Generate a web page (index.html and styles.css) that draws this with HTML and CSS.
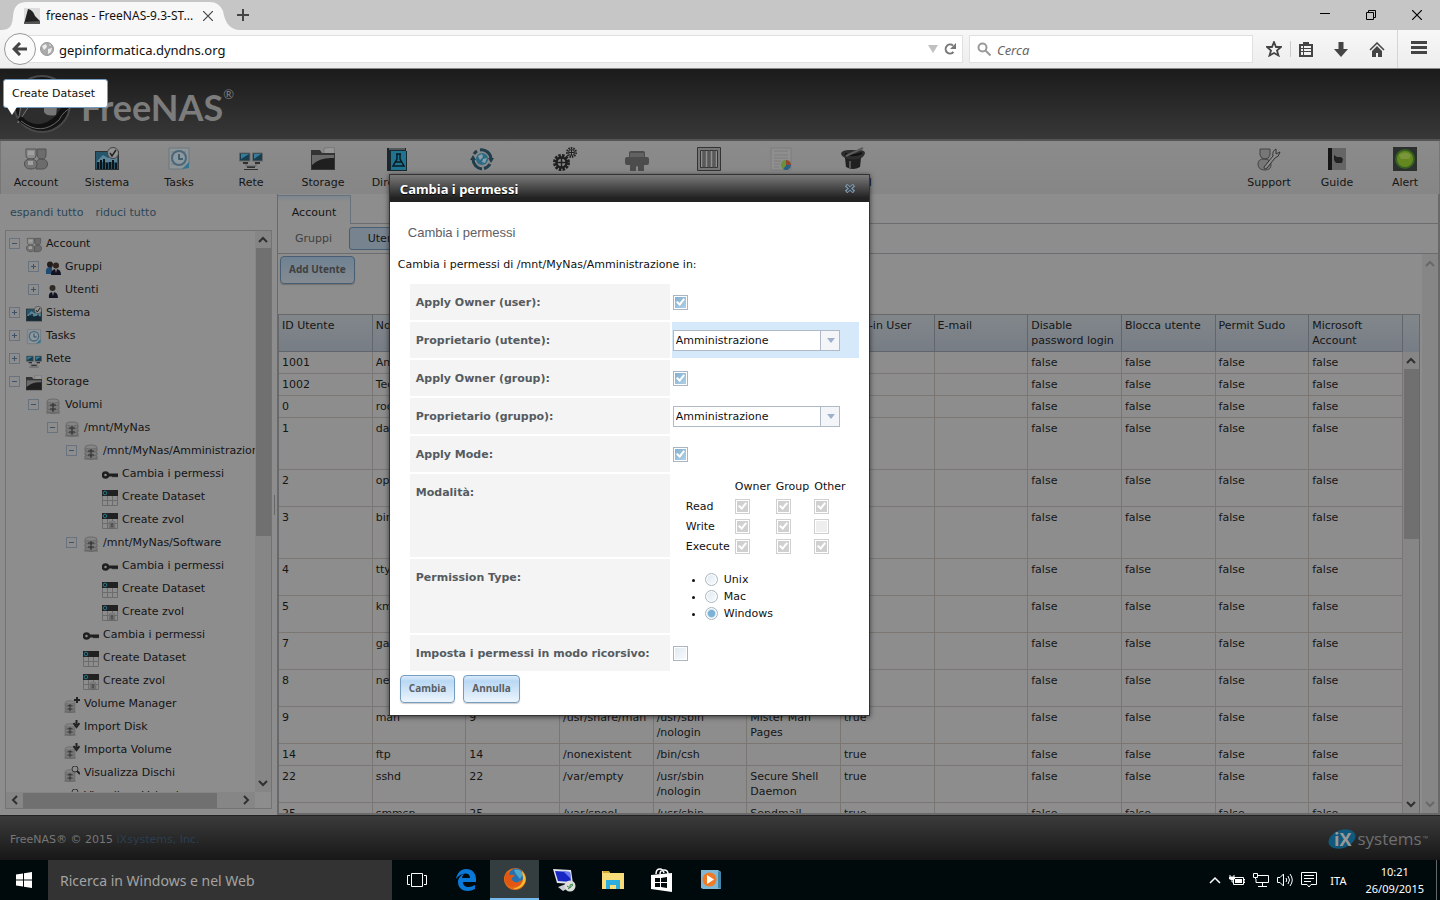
FILE: index.html
```html
<!DOCTYPE html>
<html lang="it">
<head>
    <meta charset="UTF-8">
    <meta name="viewport" content="width=device-width, initial-scale=1.0">
    <title>freenas - FreeNAS-9.3-STABLE</title>
    <link rel="stylesheet" href="styles.css">
</head>
<body>

    <!-- shared icons -->
    <svg class="sprite" width="0" height="0">
        <symbol id="i-account" viewBox="0 0 24 24">
            <g stroke="#505050" fill="#6c6c6c"><path d="M13 2h9v6c0 3-2 4-4 4s-5-1-5-4zM12 22v-5c0-4 3-5 6-5s5.500 2 5.500 5-2 5-5 5z"/><path d="M2 2h10v6c0 3-2 4-5 4S2 11 2 8z" fill="#8c8c8c"/><path d="M.500 17c0-3 2-5 6-5s6.500 2 6.500 5-2 5-6 5-6.500-2-6.500-5z" fill="#757575"/></g>
            <path d="M4 4h6v4H4zM4 14h5v4H4z" fill="#a0a0a0"/>
        </symbol>
        <symbol id="i-system" viewBox="0 0 24 24">
            <path d="M0 4h24v19H0z" fill="#2c2f31"/><path d="M1 5h22v17H1z" fill="#26566c"/><path d="M2 14l6-6 5 3 9-4v8H2z" fill="#5b8496"/>
            <path d="M3 22v-7M6 22v-9M9 22V12M12 22v-6M15 22v-7M18 22v-9M21 22v-6" stroke="#0c1519" stroke-width="2"/>
            <circle cx="18" cy="6" r="5.500" fill="#929292" stroke="#444"/><path d="M15 6l2 3 4-6" fill="none" stroke="#222" stroke-width="1.500"/>
        </symbol>
        <symbol id="i-tasks" viewBox="0 0 24 24">
            <path d="M2 1h20v16l-5 5H2z" fill="#8d9599" stroke="#6c767c"/><path d="M4 5h15M4 8h15M4 11h15M4 14h15M4 17h12" stroke="#6c7e8b"/>
            <circle cx="12" cy="11" r="7" fill="#8d989f" stroke="#4b6779" stroke-width="2"/><path d="M12 7v5h4" fill="none" stroke="#284d63" stroke-width="1.500"/><path d="M22 15l-7 7 7-1z" fill="#34758e"/>
        </symbol>
        <symbol id="i-net" viewBox="0 0 24 24">
            <path d="M0.500 6h10.500v8H.500zM13.500 6H23.500v8h-10z" fill="#183d4d" stroke="#666"/><path d="M2 7h8l-8 5zM15 7h7l-7 5z" fill="#347c9b"/>
            <path d="M4 15h5v2H4zM16 15h5v2h-5zM8 19h8v2H8zM5 22h14v1H5z" fill="#303030"/><path d="M7 17v2h10v-2" fill="none" stroke="#666"/>
        </symbol>
        <symbol id="i-storage" viewBox="0 0 24 24">
            <path d="M13 1l10-1 1 9H13z" fill="#959595" stroke="#777"/><path d="M0 3h9l2 3h13v17H0z" fill="#343434"/><path d="M1 8h22v14H1z" fill="#1f1f1f"/><path d="M1 18Q9 10 23 11V8H1z" fill="#6a6a6a"/>
        </symbol>
        <symbol id="i-directory" viewBox="0 0 24 24">
            <path d="M2 1h19v3h1v20H2z" fill="#18282e"/><path d="M6 4h15v19H6z" fill="#1e7491"/><path d="M4 2h16" stroke="#8a8a8a"/>
            <path d="M11 7h5M12 7v5l-4 7h11l-4-7V7M10 15h7" fill="none" stroke="#0b1a20" stroke-width="1.500"/>
        </symbol>
        <symbol id="i-sharing" viewBox="0 0 24 24">
            <circle cx="12" cy="12" r="6" fill="#2c6a86"/><path d="M8 9l4-2 1 3-3 3zM13 12l4-1-2 5-3-1z" fill="#86a0aa"/>
            <path d="M10 3a9.500 9.500 0 0 1 11 9M20 17a10 10 0 0 1-6 4.500M12 22A10 10 0 0 1 3 12M4 7a10 10 0 0 1 3-3" fill="none" stroke="#1f3d4b" stroke-width="3"/><path d="M18 11h6l-3 5zM0 13l3-5 3 5z" fill="#1f3d4b"/>
        </symbol>
        <symbol id="i-services" viewBox="0 0 24 24">
            <g fill="none" stroke="#1f1f1f"><circle cx="8.500" cy="15.500" r="7" stroke-width="3" stroke-dasharray="2.500 1.200"/><circle cx="8.500" cy="15.500" r="5" stroke-width="2.500"/><path d="M8.500 11v9M4 15.500h9" stroke-width="1.500"/><circle cx="18.500" cy="5.500" r="4.500" stroke-width="2" stroke-dasharray="1.500 1"/><circle cx="18.500" cy="5.500" r="3"/><path d="M18.500 3v5M16 5.500h5"/></g>
        </symbol>
        <symbol id="i-plugin" viewBox="0 0 24 24">
            <path d="M4 10V6q0-2 2-2h12q2 0 2 2v4h2q2 0 2 2v4q0 2-2 2h-3v6h-6v-4q-1-2-2 0v4H5v-6H2q-2 0-2-2v-4q0-2 2-2z" fill="#4c4c4c"/><path d="M5 6h14v4H5z" fill="#626262"/>
        </symbol>
        <symbol id="i-jails" viewBox="0 0 24 24">
            <path d="M.500.500h23v23H.5z" fill="#777" stroke="#333"/><path d="M3.500 3.500h17v17h-17z" fill="#909090" stroke="#333"/><path d="M7 3v18M12 3v18M17 3v18" stroke="#3d3d3d" stroke-width="3"/><path d="M7 4v16M12 4v16M17 4v16" stroke="#777"/>
        </symbol>
        <symbol id="i-report" viewBox="0 0 24 24">
            <path d="M2 1h20v22H2z" fill="#8f8f8f" stroke="#7c7c7c"/><path d="M5 4h14M5 8h14M5 11h14M5 14h7M5 17h6M5 20h5" stroke="#7c7c7c"/>
            <path d="M17 18v-5a5 5 0 0 1 5 5z" fill="#91472f"/><path d="M17 18h5a5 5 0 0 1-8 4z" fill="#2b5f83"/><path d="M17 18l-3 4a5 5 0 0 1 3-9z" fill="#6c9039"/>
        </symbol>
        <symbol id="i-wizard" viewBox="0 0 24 24">
            <path d="M4 11h16l-1 9q-7 4-14 0z" fill="#202020"/><path d="M0 7q0-4 9-4h8q7 0 7 3-1 5-7 6-14 2-17-5z" fill="#2d2d2d"/><path d="M4 7q8 3 17-1" stroke="#111" stroke-width="2" fill="none"/><path d="M5 9L22 1" stroke="#5c5c5c" stroke-width="2"/><path d="M9 14v7" stroke="#555" stroke-width="2"/>
        </symbol>
        <symbol id="i-support" viewBox="0 0 24 24">
            <path d="M3 2h10v6q-1 4-5 4T3 8zM1 17q0-5 6-5 7 0 7 6 0 5-6 5-7 0-7-6z" fill="#777" stroke="#454545"/>
            <path d="M7 20l9-11q-1-5 3-7v5l4-2q-1 5-5 6l-8 10q-3 2-3-1z" fill="#8c8c8c" stroke="#333"/>
        </symbol>
        <symbol id="i-guide" viewBox="0 0 24 24"><path d="M3 1h18v22H3z" fill="#656565"/><path d="M3 1h4v22H3z" fill="#151515"/><path d="M9 8l3 2h4l2 2-1 4h-6l-2-3z" fill="#222"/></symbol>
        <symbol id="i-alert" viewBox="0 0 24 24"><path d="M0 0h24v24H0z" fill="#2b302d"/><circle cx="12" cy="12" r="10" fill="#356021"/><circle cx="12" cy="12" r="8" fill="#64881f"/><path d="M6 8q6-5 12 0l-2 4H8z" fill="#7a963c"/></symbol>
        <symbol id="i-group" viewBox="0 0 16 16"><path d="M1 14q-1-6 3-7h3v7z" fill="#204b72"/><circle cx="5" cy="4.500" r="3" fill="#241e1b"/><circle cx="11" cy="5.500" r="3" fill="#30241f"/><path d="M6 15q0-6 5-6t5 6z" fill="#121220"/><path d="M10 9l1 4 1-4z" fill="#888"/></symbol>
        <symbol id="i-user" viewBox="0 0 16 16"><circle cx="7.500" cy="5" r="3" fill="#302a27"/><path d="M4 15q-1-6 4-6t5 6z" fill="#121220"/><path d="M7 9l1 4 1-4z" fill="#888"/></symbol>
        <symbol id="i-disk" viewBox="0 0 16 16">
            <path d="M2 3v12h12V3z" fill="#7b7b7b"/><ellipse cx="8" cy="3" rx="6" ry="2" fill="#858585" stroke="#6a6a6a"/><path d="M2 4v3q6 3 12 0V4M2 8v3q6 3 12 0V8M2 12v2q6 3 12 0v-2M1 15h14" fill="none" stroke="#666"/><path d="M8 5v9M5 7h6M5 11h6" stroke="#292929"/>
        </symbol>
        <symbol id="i-diskadd" viewBox="0 0 16 16"><use href="#i-disk" x="-1" y="3" width="14" height="13"/><path d="M13 0v6M10 3h6" stroke="#222" stroke-width="2"/></symbol>
        <symbol id="i-diskimport" viewBox="0 0 16 16"><use href="#i-disk" x="-1" y="3" width="14" height="13"/><path d="M12.500 0v5M9.500 3l3 4 3-4" fill="none" stroke="#222" stroke-width="2"/></symbol>
        <symbol id="i-diskview" viewBox="0 0 16 16"><use href="#i-disk" x="-1" y="3" width="14" height="13"/><circle cx="11" cy="3" r="3" fill="#8d8d8d" stroke="#333"/><path d="M13 5l3 3" stroke="#222" stroke-width="2"/></symbol>
        <symbol id="i-key" viewBox="0 0 16 16"><circle cx="3.500" cy="8" r="2.500" fill="none" stroke="#1f1f1f" stroke-width="2.500"/><path d="M6 6.500h10v3l-1 1-1-1-1 1-1-1-1 1-1-1H6z" fill="#1f1f1f"/></symbol>
        <symbol id="i-dataset" viewBox="0 0 16 16"><path d="M.500 5.500h15v10H.5zM5.500 5v10M10.500 5v10M0 10.500h16" fill="none" stroke="#6c6c6c"/><path d="M0 0h16v6H0z" fill="#212121"/><circle cx="3" cy="3" r="1.800" fill="none" stroke="#27798f"/></symbol>
        <symbol id="i-zvol" viewBox="0 0 16 16"><use href="#i-dataset"/><use href="#i-disk" x="6" y="7" width="8" height="9"/></symbol>
        <symbol id="i-up" viewBox="0 0 10 10"><path d="M1 7l4-4 4 4" fill="none" stroke="currentColor" stroke-width="2"/></symbol>
        <symbol id="i-down" viewBox="0 0 10 10"><path d="M1 3l4 4 4-4" fill="none" stroke="currentColor" stroke-width="2"/></symbol>
        <symbol id="i-left" viewBox="0 0 10 10"><path d="M7 1L3 5l4 4" fill="none" stroke="currentColor" stroke-width="2"/></symbol>
        <symbol id="i-right" viewBox="0 0 10 10"><path d="M3 1l4 4-4 4" fill="none" stroke="currentColor" stroke-width="2"/></symbol>
    </svg>

    <div class="tabstrip">
        <svg class="tab-shape" viewBox="0 0 238 28" width="238" height="28"><path d="M0 28C14 28 9 13 13 6Q16 0 24 0h184Q217 0 221 9q3 19 17 19z" fill="#f7f7f7"/></svg>
        <div class="tab">
            <svg width="16" height="16" viewBox="0 0 16 16"><path d="M0 0h16v16H0z" fill="#ddd"/><path d="M0 16L4 1q5 1 7 7l5 5v3z" fill="#222"/><path d="M0 14l16-1v3H0z" fill="#555"/></svg>
            <span class="tab-title">freenas - FreeNAS-9.3-ST...</span>
            <button class="plain" aria-label="Chiudi scheda"><svg width="10" height="10" viewBox="0 0 10 10"><path d="M0 0l10 10M10 0L0 10" stroke="#444" stroke-width="1.200"/></svg></button>
        </div>
        <button class="plain" aria-label="Nuova scheda"><svg width="12" height="12" viewBox="0 0 12 12"><path d="M6 0v12M0 6h12" stroke="#444" stroke-width="2"/></svg></button>
        <div class="win-buttons">
            <button class="plain" aria-label="Riduci"><svg width="10" height="10"><path d="M0 3.500h10" stroke="#000"/></svg></button>
            <button class="plain" aria-label="Ripristina"><svg width="10" height="10"><path d="M.500 2.500h7v7h-7zM2.500 2V.500h7v7H8" fill="none" stroke="#000"/></svg></button>
            <button class="plain" aria-label="Chiudi"><svg width="10" height="10"><path d="M0 0l10 10M10 0L0 10" stroke="#000" stroke-width="1.200"/></svg></button>
        </div>
    </div>

    <div class="navbar">
        <button class="back" aria-label="Indietro"><svg width="16" height="14" viewBox="0 0 16 14"><path d="M8 1L2 7l6 6M2 7h13" fill="none" stroke="#444" stroke-width="3"/></svg></button>
        <div class="urlbar">
            <svg width="14" height="14" viewBox="0 0 14 14"><circle cx="7" cy="7" r="6.500" fill="#aaa" stroke="#999"/><path d="M2 4l4-2 1 3-3 3zM8 7l4-1-1 4-3 2zM9 2l2 1-1 1z" fill="#eee"/></svg>
            <input class="url" aria-label="Indirizzo" value="gepinformatica.dyndns.org">
            <svg width="10" height="8"><path d="M0 0h10L5 8z" fill="#c0c0c0"/></svg>
            <svg width="12" height="12" viewBox="0 0 12 12"><path d="M9.500 9A4.500 4.500 0 1 1 9 2.500" fill="none" stroke="#777" stroke-width="2"/><path d="M6 6h6V0z" fill="#777"/></svg>
        </div>
        <div class="searchbar">
            <svg width="14" height="14" viewBox="0 0 14 14"><circle cx="5.500" cy="5.500" r="4" fill="none" stroke="#999" stroke-width="2"/><path d="M8.500 8.500l5 5" stroke="#999" stroke-width="2"/></svg>
            <input type="search" aria-label="Cerca" placeholder="Cerca">
        </div>
        <div class="nav-icons">
            <svg width="16" height="16" viewBox="0 0 16 16"><path d="M8 1l2 5h5l-4 3.500 1.500 5L8 12l-4.500 2.500L5 9.500 1 6h5z" fill="none" stroke="#444" stroke-width="1.800"/></svg>
            <span class="nav-sep"></span>
            <svg width="14" height="15" viewBox="0 0 14 15"><path d="M1 3h12v11H1z" fill="none" stroke="#444" stroke-width="2"/><path d="M4 0h6v3H4zM2 6h10v1H2zM2 9h10v1H2z" fill="#444"/><path d="M4.500 4v10" stroke="#444"/></svg>
            <svg width="14" height="15" viewBox="0 0 14 15"><path d="M4.500 0h5v7H14l-7 8-7-8h4.500z" fill="#444"/></svg>
            <svg width="16" height="15" viewBox="0 0 16 15"><path d="M1 8l7-7 7 7" fill="none" stroke="#444" stroke-width="1.500"/><path d="M3 9l5-5 5 5v6H9v-4H7v4H3z" fill="#444"/></svg>
        </div>
        <button class="menu-button" aria-label="Menu"><svg width="16" height="13"><path d="M0 1.500h16M0 6.500h16M0 11.500h16" stroke="#444" stroke-width="3"/></svg></button>
    </div>

    <header class="banner">
        <svg class="emblem" width="66" height="62" viewBox="0 0 66 62">
            <circle cx="33" cy="31" r="27" fill="#242424" stroke="#484848" stroke-width="4"/>
            <circle cx="33" cy="31" r="25" fill="#2d2d2d" stroke="#151515" stroke-width="4"/>
            <path d="M9 50L14 20l12-8h22L22 30z" fill="#333" stroke="#777"/>
            <path d="M35 34q8-8 13 0l-1 8q-9 2-12-3z" fill="#777"/>
            <path d="M10 45q20 18 39-1 5-10 15-12" fill="none" stroke="#111" stroke-width="5"/>
            <path d="M12 48q20 16 38-1 4-9 15-14" fill="none" stroke="#666"/>
        </svg>
        <span class="logo-text">FreeNAS<sup>®</sup></span>
    </header>

    <nav class="menubar">
        <button class="first"><svg><use href="#i-account"/></svg>Account</button>
        <button><svg><use href="#i-system"/></svg>Sistema</button>
        <button><svg><use href="#i-tasks"/></svg>Tasks</button>
        <button><svg><use href="#i-net"/></svg>Rete</button>
        <button><svg><use href="#i-storage"/></svg>Storage</button>
        <button class="wide"><svg><use href="#i-directory"/></svg>Directory</button>
        <button class="wider"><svg><use href="#i-sharing"/></svg>Condivisioni</button>
        <button><svg><use href="#i-services"/></svg>Servizi</button>
        <button><svg><use href="#i-plugin"/></svg>Plugins</button>
        <button><svg><use href="#i-jails"/></svg>Jails</button>
        <button><svg><use href="#i-report"/></svg>Reporting</button>
        <button><svg><use href="#i-wizard"/></svg>Wizard</button>
        <div class="menubar-right">
            <button><svg><use href="#i-support"/></svg>Support</button>
            <button><svg><use href="#i-guide"/></svg>Guide</button>
            <button><svg><use href="#i-alert"/></svg>Alert</button>
        </div>
    </nav>

    <main class="main">
        <aside class="sidebar">
            <div class="tree-links"><a href="#">espandi tutto</a><a href="#">riduci tutto</a></div>
            <div class="tree-box">
                <ul class="tree" id="tree"></ul>
                <div class="vscroll"><svg><use href="#i-up"/></svg><div class="thumb tree-thumb"></div><svg class="end"><use href="#i-down"/></svg></div>
                <div class="hscroll"><svg><use href="#i-left"/></svg><div class="thumb"></div><svg class="end"><use href="#i-right"/></svg></div>
            </div>
        </aside>
        <div class="splitter"></div>
        <section class="content">
            <div class="tabs"><button class="tab-account">Account</button></div>
            <div class="subtabs"><button>Gruppi</button><button class="selected">Utenti</button></div>
            <div class="pane">
                <div class="pane-body">
                    <div class="toolbar"><button class="btn">Add Utente</button></div>
                    <div class="grid">
                        <table class="users">
                            <thead>
                                <tr><th>ID Utente</th><th>Nome utente</th><th>Gruppo</th><th>Home</th><th>Shell</th><th>Nome</th><th>Built-in User</th><th>E-mail</th><th>Disable<br>password login</th><th>Blocca utente</th><th>Permit Sudo</th><th>Microsoft<br>Account</th></tr>
                            </thead>
                            <tbody id="users"></tbody>
                        </table>
                        <div class="grid-scroll">
                            <div class="grid-corner"></div>
                            <div class="vscroll"><svg><use href="#i-up"/></svg><div class="thumb grid-thumb"></div><svg class="end"><use href="#i-down"/></svg></div>
                        </div>
                    </div>
                </div>
                <div class="vscroll disabled"><svg><use href="#i-up"/></svg><svg class="end"><use href="#i-down"/></svg></div>
            </div>
        </section>
    </main>

    <footer class="footer">
        <span>FreeNAS® © 2015 <a href="#">iXsystems, Inc.</a></span>
        <span class="ix"><svg width="28" height="24" viewBox="0 0 28 24"><ellipse cx="14" cy="12" rx="14" ry="9" transform="rotate(-20 14 12)" fill="#11597c"/><text x="6" y="19">iX</text></svg>systems<span class="ix-tm">™</span></span>
    </footer>

    <div class="taskbar">
        <button class="task start" aria-label="Start"><svg width="16" height="16" viewBox="0 0 16 16"><path d="M0 2.500L7 1.500V7.500H0zM8 1.300L16 0v7.500H8zM0 8.500h7v6L0 13.500zM8 8.500h8V16L8 14.700z" fill="#fff"/></svg></button>
        <input class="win-search" aria-label="Ricerca in Windows" placeholder="Ricerca in Windows e nel Web">
        <button class="task" aria-label="Visualizzazione attività"><svg width="20" height="14" viewBox="0 0 20 14"><path d="M4.500.5h11v13h-11zM3 2.500H.500v9H3M17 2.500h2.500v9H17" fill="none" stroke="#fff"/></svg></button>
        <button class="task" aria-label="Edge"><svg width="22" height="22" viewBox="0 0 22 22"><path d="M1 10C2 4 6 0 11 0c7 0 10 5 10 10v3H8c0 6 7 6 12 3v4c-7 4-17 2-17-7 0-4 3-7 6-8-1 1-2 3-2 4h8c0-7-10-5-14 1z" fill="#0a78d6"/></svg></button>
        <button class="task active" aria-label="Firefox"><svg width="22" height="22" viewBox="0 0 22 22"><circle cx="11" cy="11" r="11" fill="#e66a16"/><circle cx="12" cy="8" r="7.500" fill="#2672b0"/><path d="M10 2q6-2 9 4l-3 5-4-5z" fill="#4fa8cc"/><path d="M1 6q3-3 5 1 4-1 5 1-4 1-3 4 5 5 8 0 3 4-3 6-9 3-12-5z" fill="#e35713"/><path d="M18 3q6 7 2 13-4 6-11 5 11-3 10-11z" fill="#f7bd33"/></svg></button>
        <button class="task" aria-label="Desktop remoto"><svg width="24" height="24" viewBox="0 0 24 24"><path d="M1 1l18 1 2 14-16-1z" fill="#e0e3ea"/><path d="M3 3l15 1 1 10-13-1z" fill="#1727c4"/><path d="M11 3l7 1 1 7z" fill="#6a7df0"/><path d="M6 19l8-3 4 3-7 4z" fill="#c9ccd4"/><circle cx="18" cy="18" r="5.500" fill="#ddd"/><path d="M15 18l3 2v-3l3-1M16 21l5-4" stroke="#35873f" fill="none"/></svg></button>
        <button class="task" aria-label="Esplora file"><svg width="22" height="20" viewBox="0 0 22 20"><path d="M0 1h7l1 2h14v16H0z" fill="#f9dc7a"/><path d="M1 1h6v2H1z" fill="#d9a92d"/><path d="M4 19v-9h14v9h-4v-4H8v4z" fill="#2bade0"/></svg></button>
        <button class="task" aria-label="Store"><svg width="22" height="24" viewBox="0 0 22 24"><path d="M0 7l21-2v19L0 21z" fill="#fff"/><path d="M5 6q0-5 4-5 3 0 4 4M9 6q0-4 4-4t4 4" fill="none" stroke="#fff" stroke-width="1.500"/><path d="M4 10h5v4H4zM10 10l6-1v5h-6zM4 15h5v4H4zM10 15h6v5l-6-1z" fill="#000a0c"/></svg></button>
        <button class="task" aria-label="Media Player"><svg width="20" height="20" viewBox="0 0 20 20"><path d="M0 0h17l3 2v17H2l-2-1z" fill="#7fb8d6"/><path d="M17 1l3 1v17l-3-1z" fill="#4184a8"/><circle cx="8.500" cy="9.500" r="7" fill="#ef7b24"/><path d="M6 5l7 4.500L6 14z" fill="#fff"/></svg></button>
        <div class="tray">
            <svg width="12" height="8"><path d="M1 7l5-5 5 5" fill="none" stroke="#fff" stroke-width="1.500"/></svg>
            <svg width="16" height="12" viewBox="0 0 16 12"><path d="M4.500 3.500h10v7h-10zM15 5.500h1v3h-1M1 1v2h4V1M3 3v5h1" fill="none" stroke="#fff"/><path d="M6 5h7v4H6z" fill="#fff"/><path d="M0 3h6v2L4 6H2L0 5z" fill="#fff"/></svg>
            <svg width="16" height="14" viewBox="0 0 16 14"><path d="M5 2.500h10.500v7H3V6M9.500 10v3M5 13.500h9M.500.500h4v4h-4zM2.500 4v2" fill="none" stroke="#fff"/></svg>
            <svg width="16" height="14" viewBox="0 0 16 14"><path d="M.500 4.500H3L6.500 1v12L3 9.500H.500zM9 5q1.500 2 0 4M11 3q3 4 0 8M13 1q4.500 6 0 12" fill="none" stroke="#fff"/></svg>
            <svg width="16" height="16" viewBox="0 0 16 16"><path d="M.500.500h15v12H10L8 15l-2-2.500H.500zM3 3.500h10M3 6.500h10M3 9.500h7" fill="none" stroke="#fff"/></svg>
            <span class="lang">ITA</span>
            <span class="clock">10:21<br>26/09/2015</span>
        </div>
    </div>

    <div class="tooltip">Create Dataset</div>

    <div class="dialog" role="dialog" aria-labelledby="dlgTitle">
        <div class="dialog-title"><span id="dlgTitle">Cambia i permessi</span><button class="plain" aria-label="Chiudi"><svg width="10" height="9" viewBox="0 0 10 9"><path d="M1 1l8 7M9 1L1 8" stroke="#8199ad" stroke-width="3.500"/><path d="M2 1.500l6 6M8 1.500l-6 6" stroke="#39444d" stroke-width="1.500"/></svg></button></div>
        <form class="dialog-body">
            <h2>Cambia i permessi</h2>
            <p>Cambia i permessi di /mnt/MyNas/Amministrazione in:</p>
            <table class="fields">
                <tr><th><label for="applyUser">Apply Owner (user):</label></th><td><input type="checkbox" id="applyUser" checked></td></tr>
                <tr class="focus"><th><label for="owner">Proprietario (utente):</label></th><td><span class="combo"><select id="owner"><option>Amministrazione</option></select></span></td></tr>
                <tr><th><label for="applyGroup">Apply Owner (group):</label></th><td><input type="checkbox" id="applyGroup" checked></td></tr>
                <tr><th><label for="group">Proprietario (gruppo):</label></th><td><span class="combo"><select id="group"><option>Amministrazione</option></select></span></td></tr>
                <tr><th><label for="applyMode">Apply Mode:</label></th><td><input type="checkbox" id="applyMode" checked></td></tr>
                <tr class="mode-row"><th>Modalità:</th><td>
                    <table class="mode">
                        <tr><td></td><th>Owner</th><th>Group</th><th>Other</th></tr>
                        <tr><th>Read</th><td><input type="checkbox" aria-label="Owner read" checked disabled></td><td><input type="checkbox" aria-label="Group read" checked disabled></td><td><input type="checkbox" aria-label="Other read" checked disabled></td></tr>
                        <tr><th>Write</th><td><input type="checkbox" aria-label="Owner write" checked disabled></td><td><input type="checkbox" aria-label="Group write" checked disabled></td><td><input type="checkbox" aria-label="Other write" disabled></td></tr>
                        <tr><th>Execute</th><td><input type="checkbox" aria-label="Owner execute" checked disabled></td><td><input type="checkbox" aria-label="Group execute" checked disabled></td><td><input type="checkbox" aria-label="Other execute" checked disabled></td></tr>
                    </table>
                </td></tr>
                <tr class="type-row"><th>Permission Type:</th><td>
                    <ul class="types">
                        <li><label><input type="radio" name="acl">Unix</label></li>
                        <li><label><input type="radio" name="acl">Mac</label></li>
                        <li><label><input type="radio" name="acl" checked>Windows</label></li>
                    </ul>
                </td></tr>
                <tr><th><label for="recursive">Imposta i permessi in modo ricorsivo:</label></th><td><input type="checkbox" id="recursive"></td></tr>
            </table>
            <div class="dialog-actions"><button type="button" class="btn bright">Cambia</button><button type="button" class="btn bright">Annulla</button></div>
        </form>
    </div>

    <script>
        // level, state (- open, + closed, empty leaf), icon, label
        const nodes = [
            [0, "-", "account", "Account"],
            [1, "+", "group", "Gruppi"],
            [1, "+", "user", "Utenti"],
            [0, "+", "system", "Sistema"],
            [0, "+", "tasks", "Tasks"],
            [0, "+", "net", "Rete"],
            [0, "-", "storage", "Storage"],
            [1, "-", "disk", "Volumi"],
            [2, "-", "disk", "/mnt/MyNas"],
            [3, "-", "disk", "/mnt/MyNas/Amministrazione"],
            [4, "", "key", "Cambia i permessi"],
            [4, "", "dataset", "Create Dataset"],
            [4, "", "zvol", "Create zvol"],
            [3, "-", "disk", "/mnt/MyNas/Software"],
            [4, "", "key", "Cambia i permessi"],
            [4, "", "dataset", "Create Dataset"],
            [4, "", "zvol", "Create zvol"],
            [3, "", "key", "Cambia i permessi"],
            [3, "", "dataset", "Create Dataset"],
            [3, "", "zvol", "Create zvol"],
            [2, "", "diskadd", "Volume Manager"],
            [2, "", "diskimport", "Import Disk"],
            [2, "", "diskimport", "Importa Volume"],
            [2, "", "diskview", "Visualizza Dischi"],
            [2, "", "diskview", "Visualizza Volumi"]
        ];
        document.getElementById("tree").innerHTML = nodes.map(([level, state, icon, label]) => `
            <li class="level-${level}">
                <span class="expander ${state === "-" ? "open" : state === "+" ? "closed" : ""}"></span>
                <svg><use href="#i-${icon}"/></svg><span>${label}</span>
            </li>`).join("");

        const nologin = "/usr/sbin<br>/nologin";
        const users = [
            ["1001", "Amministra", "1001", "/nonexistent", "/bin/sh", "Ammin", "false"],
            ["1002", "Tecnico", "1002", "/nonexistent", "/bin/sh", "Tecnico", "false"],
            ["0", "root", "0", "/root", "/bin/csh", "root", "true"],
            ["1", "daemon", "1", "/root", nologin, "Owner of<br>many system<br>processes", "true"],
            ["2", "operator", "5", "/", nologin, "System &", "true"],
            ["3", "bin", "7", "/", nologin, "Binaries<br>Commands<br>and Source", "true"],
            ["4", "tty", "65533", "/", nologin, "Tty Sandbox", "true"],
            ["5", "kmem", "65533", "/", nologin, "KMem", "true"],
            ["7", "games", "13", "/usr/games", nologin, "Games", "true"],
            ["8", "news", "8", "/", nologin, "News", "true"],
            ["9", "man", "9", "/usr/share/man", nologin, "Mister Man<br>Pages", "true"],
            ["14", "ftp", "14", "/nonexistent", "/bin/csh", "", "true"],
            ["22", "sshd", "22", "/var/empty", nologin, "Secure Shell<br>Daemon", "true"],
            ["25", "smmsp", "25", "/var/spool<br>/clientmqueue", nologin, "Sendmail", "true"]
        ];
        document.getElementById("users").innerHTML = users.map(row => {
            const cells = row.concat("", "false", "false", "false", "false");
            return "<tr>" + cells.map(cell => `<td>${cell}</td>`).join("") + "</tr>";
        }).join("");
    </script>

</body>
</html>
```

FILE: styles.css
```css
* {
    box-sizing: border-box;
}
body {
    margin: 0;
    height: 100vh;
    overflow: hidden;
    display: flex;
    flex-direction: column;
    background: #8d8d8d;
    color: #151515;
    font: 11px/15px "DejaVu Sans", Verdana, sans-serif;
    position: relative;
}
button, input, select {
    font: inherit;
    color: inherit;
}
svg {
    flex: none;
}
.sprite {
    position: absolute;
}
.plain {
    background: none;
    border: 0;
    padding: 0;
    display: flex;
}

/* browser */
.tabstrip {
    height: 30px;
    flex: none;
    background: #c6c6c6;
    display: flex;
    align-items: center;
    position: relative;
    font: 12px/16px "Noto Sans", sans-serif;
    color: #111;
}
.tab-shape {
    position: absolute;
    left: 2px;
    bottom: 0;
}
.tab {
    position: relative;
    width: 237px;
    padding: 2px 24px 0 24px;
    display: flex;
    align-items: center;
    gap: 6px;
}
.tab-title {
    flex: 1;
    white-space: nowrap;
}
.win-buttons {
    margin-left: auto;
    display: flex;
    gap: 36px;
    padding-right: 18px;
}
.navbar {
    height: 39px;
    flex: none;
    background: linear-gradient(#f7f7f7, #ededed);
    border-bottom: 1px solid #888;
    display: flex;
    align-items: center;
    padding-left: 4px;
    font: 13px/18px "Noto Sans", sans-serif;
}
.back {
    width: 32px;
    height: 32px;
    border-radius: 50%;
    border: 1px solid #999;
    background: #fafafa;
    padding: 0;
    display: flex;
    align-items: center;
    justify-content: center;
    flex: none;
    z-index: 1;
}
.urlbar, .searchbar {
    height: 28px;
    background: #fff;
    border: 1px solid #e0e0e0;
    display: flex;
    align-items: center;
    gap: 6px;
}
.urlbar {
    flex: 1;
    margin-left: -8px;
    padding: 0 6px 0 11px;
}
.urlbar input {
    flex: 1;
    padding: 2px 0 0;
    margin-left: -1px;
    border: 0;
    background: none;
    color: #111;
}
.searchbar {
    width: 284px;
    margin-left: 6px;
    padding: 0 7px;
}
.searchbar input {
    width: 220px;
    border: 0;
    padding: 2px 0 0;
    background: none;
}
.searchbar input::placeholder {
    color: #666;
    font-style: italic;
    opacity: 1;
}
.nav-icons {
    display: flex;
    align-items: center;
    width: 144px;
    padding-left: 13px;
    gap: 21px;
}
.nav-sep {
    width: 1px;
    height: 16px;
    background: #ccc;
    margin: 0 -13px;
}
.menu-button {
    width: 43px;
    height: 38px;
    border: 0;
    border-left: 1px solid #d5d5d5;
    background: none;
    padding: 0;
}

/* banner and menu */
.banner {
    height: 72px;
    flex: none;
    background: linear-gradient(#1b1b1b, #383838);
    border-bottom: 2px solid #555;
    padding-left: 9px;
    display: flex;
    align-items: center;
}
.logo-text {
    font: bold 36px/40px Lato, sans-serif;
    color: #7c7c7c;
    margin-left: 6px;
    padding-top: 6px;
    display: flex;
}
.logo-text sup {
    font: 13px/14px Lato, sans-serif;
}
.menubar {
    height: 53px;
    flex: none;
    background: linear-gradient(#8b8b8b, #868686);
    border: 1px solid #777;
    border-width: 0 1px;
    display: flex;
}
.menubar button {
    width: 72px;
    flex: none;
    border: 0;
    padding: 6px 0 0;
    background: none;
    display: flex;
    flex-direction: column;
    align-items: center;
    gap: 4px;
}
.menubar svg {
    width: 24px;
    height: 24px;
}
.menubar .first {
    width: 70px;
}
.menubar .wide {
    width: 76px;
}
.menubar .wider {
    width: 94px;
}
.menubar-right {
    margin-left: auto;
    display: flex;
}
.menubar-right button {
    width: 68px;
}

/* main area */
.main {
    flex: 1;
    min-height: 0;
    display: flex;
}
.sidebar {
    width: 272px;
    flex: none;
    padding: 11px 0 6px 5px;
    display: flex;
    flex-direction: column;
}
.tree-links {
    display: flex;
    gap: 12px;
    padding-left: 5px;
    margin-bottom: 10px;
}
a {
    color: #2b4658;
    text-decoration: none;
}
.tree-box {
    flex: 1;
    min-height: 0;
    border: 1px solid #737373;
    display: grid;
    grid-template-columns: 1fr 16px;
    grid-template-rows: 1fr 16px;
}
.tree {
    list-style: none;
    margin: 0;
    padding: 1px 0 0;
    overflow: hidden;
    min-width: 0;
    min-height: 0;
}
.tree li {
    height: 23px;
    display: flex;
    align-items: center;
    white-space: nowrap;
    padding-left: 3px;
}
.tree .level-1 { padding-left: 22px; }
.tree .level-2 { padding-left: 41px; }
.tree .level-3 { padding-left: 60px; }
.tree .level-4 { padding-left: 79px; }
.tree svg {
    width: 16px;
    height: 16px;
    margin: 2px 4px 0 6px;
}
.expander {
    width: 11px;
    height: 11px;
    flex: none;
}
.expander.open, .expander.closed {
    border: 1px solid #69737f;
    background: linear-gradient(#3d5266, #3d5266) center / 5px 1px no-repeat;
}
.expander.closed {
    background: linear-gradient(#3d5266, #3d5266) center / 5px 1px no-repeat, linear-gradient(#3d5266, #3d5266) center / 1px 5px no-repeat;
}
.vscroll, .hscroll {
    background: #868686;
    color: #303030;
    display: flex;
    align-items: center;
    min-height: 0;
}
.vscroll {
    flex-direction: column;
    padding: 4px 0;
    width: 16px;
}
.vscroll svg, .hscroll svg {
    width: 10px;
    height: 10px;
}
.vscroll .end {
    margin-top: auto;
}
.hscroll .end {
    margin-left: auto;
}
.hscroll {
    padding: 0 4px;
}
.thumb {
    background: #707070;
}
.vscroll .thumb {
    width: 15px;
    margin-top: 3px;
}
.tree-thumb {
    height: 52%;
}
.hscroll .thumb {
    height: 15px;
    width: 194px;
    margin-left: 3px;
}
.vscroll.disabled {
    color: #686868;
    padding: 5px 0 4px;
}
.splitter {
    width: 6px;
    flex: none;
    background: linear-gradient(#666, #666) 2px 50% / 1px 20px no-repeat;
}
.content {
    flex: 1;
    min-width: 0;
    border: 1px solid #696969;
    border-width: 0 2px 2px 1px;
    margin-left: -1px;
    display: flex;
    flex-direction: column;
}
.tabs {
    height: 30px;
    flex: none;
    border-bottom: 1px solid #6a6c70;
}
.tab-account {
    width: 73px;
    height: 29px;
    margin-top: 1px;
    border: 1px solid #68727c;
    border-width: 1px 1px 0 0;
    background: linear-gradient(#7d8790, #8d8d8d 6px);
    padding: 5px 0 0;
}
.subtabs {
    height: 30px;
    flex: none;
    border-bottom: 1px solid #6a6c70;
    display: flex;
    align-items: center;
}
.subtabs button {
    width: 71px;
    height: 23px;
    border: 0;
    background: none;
    color: #404040;
    padding: 0;
}
.subtabs .selected {
    border: 1px solid #475e73;
    border-radius: 3px;
    background: #77838f;
    color: #151515;
}
.pane {
    flex: 1;
    min-height: 0;
    display: flex;
}
.pane-body {
    flex: 1;
    min-width: 0;
    margin-right: 2px;
    display: flex;
    flex-direction: column;
}
.toolbar {
    height: 60px;
    flex: none;
    padding: 2px;
}
.btn {
    height: 28px;
    padding: 0 8px 2px;
    border: 1px solid #475e73;
    border-radius: 4px;
    background: linear-gradient(#6f8293, #858b91);
    box-shadow: 0 1px 1px rgba(0, 0, 0, .2);
    color: #404040;
    font: bold 10px/14px "Noto Sans", sans-serif;
}
.btn.bright {
    border-color: #759dc0;
    background: linear-gradient(#dbeaf9, #b9d8f4 20%, #edf5fd);
    color: #5a6065;
}
.grid {
    flex: 1;
    min-height: 0;
    border: 1px solid #66686b;
    border-bottom: 0;
    display: flex;
    overflow: hidden;
}
.users {
    width: 100%;
    min-width: 0;
    align-self: flex-start;
    table-layout: fixed;
    border-collapse: separate;
    border-spacing: 0;
}
.users th, .users td {
    padding: 3px;
    border-right: 1px solid #7b7671;
    border-bottom: 1px solid #7b7671;
    text-align: left;
    vertical-align: top;
    font-weight: normal;
    white-space: nowrap;
}
.users th {
    height: 37px;
    background: linear-gradient(#82878b, #777d85);
    border-color: #62666c;
}
.grid-scroll {
    width: 16px;
    flex: none;
    display: flex;
    flex-direction: column;
}
.grid-corner {
    height: 37px;
    background: linear-gradient(#82878b, #777d85);
    flex: none;
}
.grid-scroll .vscroll {
    flex: 1;
}
.grid-thumb {
    height: 170px;
}

/* footer */
.footer {
    height: 45px;
    flex: none;
    border-top: 1px solid #222;
    background: linear-gradient(#3b3b3b, #171717);
    color: #777;
    display: flex;
    justify-content: space-between;
    align-items: center;
    padding: 2px 12px 0 10px;
}
.footer a {
    color: #2b3f50;
}
.ix {
    display: flex;
    align-items: center;
    gap: 1px;
    font: 17px/24px "Open Sans", sans-serif;
    color: #6f6f6f;
}
.ix text {
    fill: #999;
    font-weight: bold;
    font-size: 18px;
}
.ix-tm {
    font-size: 7px;
    line-height: 16px;
}

/* taskbar */
.taskbar {
    height: 40px;
    flex: none;
    background: #000a0c;
    display: flex;
    color: #fff;
    font: 11px/17px "Noto Sans", sans-serif;
}
.task {
    width: 49px;
    border: 0;
    padding: 0;
    background: none;
    display: flex;
    align-items: center;
    justify-content: center;
}
.task.start {
    width: 48px;
}
.task.active {
    background: #343d3f;
    border-bottom: 2px solid #76b9ed;
}
.win-search {
    width: 344px;
    border: 0;
    background: #333;
    padding: 0 12px;
    font-size: 14px;
}
.win-search::placeholder {
    color: #a3a3a3;
    opacity: 1;
}
.tray {
    margin: 0 3px 0 auto;
    padding-right: 12px;
    border-right: 1px solid #666;
    display: flex;
    align-items: center;
    gap: 8px;
}
.lang {
    margin-left: 5px;
}
.clock {
    margin-left: 11px;
    text-align: center;
}

/* tooltip */
.tooltip {
    position: absolute;
    left: 3px;
    top: 79px;
    padding: 6px 8px;
    background: #fff;
    border: 1px solid #759dc0;
    border-radius: 3px;
    color: #111;
    width: 105px;
    height: 29px;
}
.tooltip::after {
    content: "";
    position: absolute;
    left: 3px;
    top: 100%;
    border: 5px solid transparent;
    border-top: 8px solid #fff;
    border-bottom: 0;
}

/* dialog */
.dialog {
    position: absolute;
    left: 27%;
    top: 174px;
    width: 481px;
    background: #fff;
    border: 1px solid #333;
    box-shadow: 0 1px 5px rgba(0, 0, 0, .6);
    color: #111;
}
.dialog-title {
    height: 27px;
    padding: 0 14px 0 10px;
    background: linear-gradient(#7a7a7a, #222 85%);
    display: flex;
    justify-content: space-between;
    align-items: center;
    color: #fff;
    font: bold 13px/18px "Noto Sans", sans-serif;
    text-shadow: 0 1px 1px #000;
}
.dialog-body {
    padding: 22px 8px 12px;
}
.dialog-body h2 {
    margin: 0 0 15px 10px;
    font: 13px/18px "Liberation Sans", Arial, sans-serif;
    color: #5c6066;
}
.dialog-body p {
    margin: 0 0 10px;
}
.fields {
    margin-left: 10px;
    border-spacing: 2px;
    border-collapse: separate;
}
.fields > tbody > tr > th {
    width: 260px;
    height: 36px;
    padding: 0 0 0 6px;
    background: #f4f4f4;
    color: #555b60;
    text-align: left;
    white-space: nowrap;
}
.fields > tbody > tr > td {
    width: 187px;
    padding: 0 0 0 1px;
}
.fields > tbody > .focus > td {
    background: #d6e9fb;
}
.fields > tbody > .mode-row > *, .fields > tbody > .type-row > * {
    vertical-align: top;
}
.fields > tbody > .mode-row > th {
    height: 83px;
    padding-top: 11px;
}
.fields > tbody > .type-row > th {
    height: 74px;
    padding-top: 11px;
}
input[type="checkbox"], input[type="radio"] {
    appearance: none;
    width: 15px;
    height: 15px;
    margin: 0;
    border: 1px solid #a9b5c2;
    background: linear-gradient(135deg, #dde9f2, #fbfcfe);
    box-shadow: inset 0 0 0 1px #fff;
    display: block;
    position: relative;
}
input[type="checkbox"]:checked {
    background: linear-gradient(135deg, #7fadcf, #b4d3e8);
}
input[type="checkbox"]:checked::after {
    content: "";
    position: absolute;
    left: 4px;
    top: 1px;
    width: 3px;
    height: 6px;
    border: solid #fff;
    border-width: 0 2px 2px 0;
    transform: rotate(40deg);
}
input[type="checkbox"]:disabled {
    background: #eee;
    border-color: #d0d0d0;
}
input[type="checkbox"]:disabled:checked {
    background: #d0d0d0;
}
.combo {
    display: block;
    position: relative;
    width: 167px;
}
.combo::after {
    content: "";
    position: absolute;
    right: 5px;
    top: 8px;
    border: 4px solid transparent;
    border-top: 5px solid #9fb0cb;
    border-bottom: 0;
    pointer-events: none;
}
.combo select {
    appearance: none;
    display: block;
    width: 100%;
    height: 21px;
    padding: 0 20px 0 2px;
    border: 1px solid #b0b9c6;
    border-radius: 0;
    background: linear-gradient(90deg, #b0b9c6 1px, #f4f5f8 1px) right / 19px 100% no-repeat #fff;
}
.mode {
    margin: 2px 0 0 11px;
    border-spacing: 0;
}
.mode th, .mode td {
    height: 20px;
    padding: 0 5px 0 0;
    font-weight: normal;
    text-align: left;
}
.mode th:first-child {
    padding-left: 2px;
}
.types {
    margin: 12px 0 0;
    padding-left: 32px;
    line-height: 17px;
}
.types li {
    height: 17px;
}
.types input[type="radio"] {
    width: 13px;
    height: 13px;
    border-radius: 50%;
    display: inline-block;
    vertical-align: -3px;
    margin-right: 6px;
}
.types input[type="radio"]:checked {
    background: radial-gradient(#7bb2d5 40%, #d9e9f3 55%);
}
.dialog-actions {
    display: flex;
    gap: 8px;
    padding-left: 2px;
    margin-top: 2px;
}
```
